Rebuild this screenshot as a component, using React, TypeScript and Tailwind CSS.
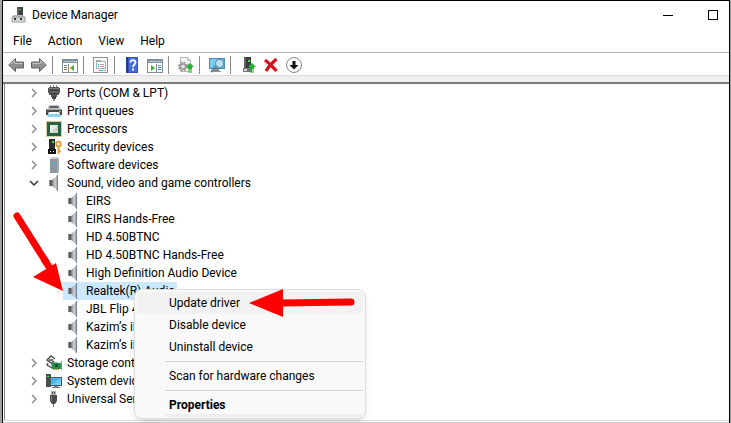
import { useState, type ReactNode } from "react";

type IconProps = { children: ReactNode };

function Icon({ children }: IconProps) {
  return (
    <svg viewBox="0 0 16 16" className="h-4 w-4 shrink-0" aria-hidden="true">
      {children}
    </svg>
  );
}

/* Tree icons */

function PortIcon() {
  return (
    <Icon>
      <path d="M4.500 0v3M7.500 0v3M10.500 0v3" stroke="#8a8a8a" />
      <path d="M3 2h10v1h1v5h-1v2h-2v2H5v-2H3V8H2V3h1z" fill="#555" />
      <path d="M3 3h10v1H3z" fill="#7c7c7c" />
      <path d="M4 5.500h8M5 8.500h6" stroke="#383838" />
      <path d="M4 7h8" stroke="#747474" />
      <path d="M6 11h4v3H6z" fill="#444" />
      <path d="M7 14h2v2H7z" fill="#8a8a8a" />
    </Icon>
  );
}

function PrinterIcon() {
  return (
    <Icon>
      <path d="M3 2h10l2 4H1z" fill="#c3c6c8" />
      <path d="M4 3h8l1 2H3z" fill="#5a6063" />
      <path d="M1 6h14l1 1v5H0V7z" fill="#4a4a4a" />
      <path d="M1 6h14v1H1z" fill="#a8a8a8" />
      <path d="M3 9h10l2 5H1z" fill="#8ad4ef" />
      <path d="M3 9h10l1 2H2z" fill="#f7f7f7" />
      <path d="M13 8h2v1h-2z" fill="#52d34f" />
    </Icon>
  );
}

function ProcessorIcon() {
  return (
    <Icon>
      <rect x="0.500" y="0.500" width="15" height="15" fill="none" stroke="#b79a4a" strokeDasharray="1 1" />
      <rect x="1" y="1" width="14" height="14" fill="#25623f" />
      <rect x="4" y="4" width="8" height="8" fill="#e9ebea" />
      <path d="M4 12l8-8v8z" fill="#cfd3d1" />
    </Icon>
  );
}

function SecurityIcon() {
  return (
    <Icon>
      <path d="M3 0h6v11H3z" fill="#2b2b2b" />
      <path d="M6 2h2v2H6z" fill="#35e83b" />
      <path d="M2 10h8v5H2z" fill="#161616" />
      <path d="M4 12h1v1H4zM7 12h1v1H7z" fill="#fff" />
      <circle cx="12.500" cy="5" r="2.300" fill="none" stroke="#dc9a2e" strokeWidth="1.800" />
      <path d="M12.500 7v8M12.500 12.500H15M12.500 10H14" stroke="#dc9a2e" strokeWidth="1.600" fill="none" />
    </Icon>
  );
}

function SoftwareIcon() {
  return (
    <Icon>
      <path d="M5 1l2-1h4l2 1v14l-1 1H4V2z" fill="#a3abb0" />
      <path d="M4 2h7v14H4z" fill="#8b979f" />
      <path d="M5 1l2-1h4l2 1-2 1H4z" fill="#c9ced1" />
      <path d="M7 5h2v2H7z" fill="#35c9f5" />
    </Icon>
  );
}

function SpeakerIcon() {
  return (
    <Icon>
      <defs>
        <linearGradient id="cone" x1="0" x2="1">
          <stop offset="0" stopColor="#777b7e" />
          <stop offset="0.500" stopColor="#d0d2d4" />
          <stop offset="1" stopColor="#888d91" />
        </linearGradient>
      </defs>
      <path d="M3 5h3v6H3z" fill="#8d9092" />
      <path d="M4 5h2v6H4z" fill="#5b5f62" />
      <path d="M6 5l5-4h1v14h-1l-5-4z" fill="url(#cone)" />
      <path d="M11 0h1v16h-1z" fill="#708496" />
    </Icon>
  );
}

function StorageIcon() {
  return (
    <Icon>
      <path d="M9 4L5 1 1 5l4 3 3-2M3 5h4M2 8l-1 2 5 3" fill="none" stroke="#4a4a4a" strokeWidth="1.400" />
      <path d="M5 7l10 1v6H6z" fill="#2f8a4b" />
      <path d="M9 9h3v3H9z" fill="#1b4f35" />
      <path d="M7 14h6v1H7z" fill="#cda94a" />
      <path d="M15.500 6v9" stroke="#8f8f8f" />
    </Icon>
  );
}

function SystemIcon() {
  return (
    <Icon>
      <path d="M0 1h5v13H0z" fill="#484c4e" />
      <path d="M1 3h2v1H1z" fill="#43e04a" />
      <path d="M4 4h12v9H4z" fill="#4b5b66" />
      <path d="M5 5h10v7H5z" fill="#3fb4ee" />
      <path d="M5 12l10-7v7z" fill="#72cbf6" />
      <path d="M8 13h4v1H8zM6 14h8v1H6z" fill="#777" />
    </Icon>
  );
}

function UsbIcon() {
  return (
    <Icon>
      <path d="M5 0h5v4H5z" fill="#b5b5b5" />
      <path d="M6 1h1v2H6zM8 1h1v2H8z" fill="#4b4b4b" />
      <path d="M4 4h7v6l-2 3H6l-2-3z" fill="#4a4a4a" />
      <path d="M5 5h1v5H5z" fill="#858585" />
      <path d="M7 13h1v3H7z" fill="#777" />
    </Icon>
  );
}

/* Toolbar icons */

const arrowPath = "M0.700 8L7.500 1.500v3.500H15.500v6H7.500v3.500z";

function BackIcon() {
  return (
    <Icon>
      <path d={arrowPath} fill="#8e8e8e" stroke="#636363" />
      <path d="M2.500 7.500l4-4V6.500h8" fill="none" stroke="#c0c0c0" />
    </Icon>
  );
}

function ForwardIcon() {
  return (
    <Icon>
      <path d={arrowPath} transform="matrix(-1 0 0 1 16 0)" fill="#8e8e8e" stroke="#636363" />
      <path d="M13.500 7.500l-4-4V6.500h-8" fill="none" stroke="#c0c0c0" />
    </Icon>
  );
}

function PaneFrame({ children }: IconProps) {
  return (
    <Icon>
      <rect x="0.500" y="2.500" width="15" height="13" fill="#fff" stroke="#7d8d9b" />
      <path d="M1 3h14v3H1z" fill="#8595a3" />
      <path d="M2 4h9v1H2z" fill="#b9c4cc" />
      <path d="M12 4h1v1h-1zM14 4h1v1h-1z" fill="#fff" />
      {children}
    </Icon>
  );
}

function ConsoleTreeIcon() {
  return (
    <PaneFrame>
      <path d="M6.500 7v8" stroke="#7d8d9b" />
      <path d="M2 8.500h3M2 10.500h3M2 12.500h3" stroke="#4f87bd" />
      <path d="M12 8v6l-4-3z" fill="#3fae35" />
    </PaneFrame>
  );
}

function ActionPaneIcon() {
  return (
    <PaneFrame>
      <path d="M9.500 7v8" stroke="#7d8d9b" />
      <path d="M11 8.500h3M11 10.500h3M11 12.500h3" stroke="#4f87bd" />
      <path d="M4 8v6l4-3z" fill="#3fae35" />
    </PaneFrame>
  );
}

function PropertiesIcon() {
  return (
    <Icon>
      <rect x="0.500" y="0.500" width="14" height="15" fill="#f7f7f7" stroke="#929292" />
      <path d="M3.500 4.500h9v7h-9z" fill="#fff" stroke="#a7b0b7" />
      <path d="M3 3h5v2H3z" fill="#9aa7b1" />
      <path d="M5 7.500h1M5 9.500h1" stroke="#3d8dcb" />
      <path d="M7 7.500h4M7 9.500h4" stroke="#a8a8a8" />
      <path d="M6 13h4v1H6z" fill="#38b9e8" />
      <path d="M11 13h2v1h-2z" fill="#aaa" />
    </Icon>
  );
}

function HelpIcon() {
  return (
    <Icon>
      <path d="M2 0h12v16H2z" fill="#3156b8" />
      <path d="M2 0h2v16H2z" fill="#1f3c91" />
      <path d="M5 1h8v14H5z" fill="#4370d2" />
      <path d="M6.500 5.500c0-3.500 5-3 5 0C11.500 7.500 9 7.500 9 10" fill="none" stroke="#fff" strokeWidth="1.800" />
      <path d="M8 11.500h2v2H8z" fill="#fff" />
    </Icon>
  );
}

function UpdateIcon() {
  return (
    <Icon>
      <path d="M2.500 0.500h7l3 3v11h-10z" fill="#f5f5f5" stroke="#b9b9b9" />
      <path d="M9.500 0.500v3h3" fill="none" stroke="#b9b9b9" />
      <circle cx="5" cy="9.500" r="4" fill="none" stroke="#9a9a9a" strokeWidth="2" strokeDasharray="2 1.140" />
      <circle cx="5" cy="9.500" r="2.500" fill="#eee" stroke="#9a9a9a" strokeWidth="1.500" />
      <path d="M12 6l4 4h-2v2h-4v-2H8z" fill="#23b32c" />
      <path d="M10 12.500h4v1h-4zM10 14.500h4v1h-4z" fill="#23b32c" />
    </Icon>
  );
}

function ScanIcon() {
  return (
    <Icon>
      <path d="M0 1h16v11H0z" fill="#4a8dba" />
      <path d="M1 2h14v9H1z" fill="#54b7e8" />
      <path d="M1 11L13 2H1z" fill="#7fcbf0" />
      <path d="M5 12h5v2H5zM3 14h9v1H3z" fill="#8a8a8a" />
      <path d="M7.500 9.500L2 15" stroke="#6e7d87" strokeWidth="2" />
      <circle cx="10.500" cy="6.500" r="4" fill="#b9e3f7" stroke="#6f8fa3" strokeWidth="1.200" />
    </Icon>
  );
}

function EnableIcon() {
  return (
    <Icon>
      <path d="M4 0h7v12H4z" fill="#3b3b3b" />
      <path d="M4 0h2v12H4z" fill="#626262" />
      <path d="M8 3h2v2H8z" fill="#38e33f" />
      <path d="M3 11h9v4H3z" fill="#757575" />
      <path d="M4 12h3v2H4z" fill="#d4d4d4" />
      <path d="M12 6l4 4h-2v2h-4v-2H8z" fill="#23b32c" />
      <path d="M10 12.500h4v1h-4zM10 14.500h4v1h-4z" fill="#23b32c" />
    </Icon>
  );
}

function UninstallIcon() {
  return (
    <Icon>
      <path d="M2 3C6 6 10 10 13.500 14M13.500 2C9 6 6 9 3 14" fill="none" stroke="#d8101c" strokeWidth="3.200" />
    </Icon>
  );
}

function DisableIcon() {
  return (
    <Icon>
      <circle cx="8" cy="8" r="7.500" fill="#fafafa" stroke="#888" />
      <path d="M6.500 4h3v4h3L8 12.500 3.500 8h3z" fill="#111" />
    </Icon>
  );
}

function DeviceManagerIcon() {
  return (
    <Icon>
      <path d="M6 0h6v9H6z" fill="#3d4042" />
      <path d="M6 0h2v9H6z" fill="#5c6062" />
      <path d="M8 2h2v1H8z" fill="#39d84a" />
      <path d="M2 8h9l3 2v5H1v-5z" fill="#b8bcbf" />
      <path d="M1 10h13v5H1z" fill="#d3d5d6" stroke="#8e9193" strokeWidth="0.800" />
      <path d="M3 11h2v2H3zM9 11h2v2H9z" fill="#333" />
    </Icon>
  );
}

type Tool = { label: string; icon: ReactNode };

const toolGroups: Tool[][] = [
  [
    { label: "Back", icon: <BackIcon /> },
    { label: "Forward", icon: <ForwardIcon /> },
  ],
  [{ label: "Show/Hide console tree", icon: <ConsoleTreeIcon /> }],
  [{ label: "Properties", icon: <PropertiesIcon /> }],
  [
    { label: "Help", icon: <HelpIcon /> },
    { label: "Show/Hide action pane", icon: <ActionPaneIcon /> },
  ],
  [{ label: "Update device driver", icon: <UpdateIcon /> }],
  [{ label: "Scan for hardware changes", icon: <ScanIcon /> }],
  [
    { label: "Enable device", icon: <EnableIcon /> },
    { label: "Uninstall device", icon: <UninstallIcon /> },
    { label: "Disable device", icon: <DisableIcon /> },
  ],
];

type Category = { name: string; icon: ReactNode; devices?: string[] };

const categories: Category[] = [
  { name: "Ports (COM & LPT)", icon: <PortIcon /> },
  { name: "Print queues", icon: <PrinterIcon /> },
  { name: "Processors", icon: <ProcessorIcon /> },
  { name: "Security devices", icon: <SecurityIcon /> },
  { name: "Software devices", icon: <SoftwareIcon /> },
  {
    name: "Sound, video and game controllers",
    icon: <SpeakerIcon />,
    devices: [
      "EIRS",
      "EIRS Hands-Free",
      "HD 4.50BTNC",
      "HD 4.50BTNC Hands-Free",
      "High Definition Audio Device",
      "Realtek(R) Audio",
      "JBL Flip 4",
      "Kazim’s iPhone",
      "Kazim’s iPhone",
    ],
  },
  { name: "Storage controllers", icon: <StorageIcon /> },
  { name: "System devices", icon: <SystemIcon /> },
  { name: "Universal Serial Bus", icon: <UsbIcon /> },
];

function Chevron({ open }: { open: boolean }) {
  return (
    <svg viewBox="0 0 12 12" className="h-3 w-3 shrink-0" fill="none" strokeWidth="1.500" aria-hidden="true">
      {open ? <path d="M2 4l4 4 4-4" stroke="#333" /> : <path d="M4 2l4 4-4 4" stroke="#8c8c8c" />}
    </svg>
  );
}

function DeviceTree() {
  const [selected, setSelected] = useState(5);

  return (
    <ul className="ml-px flex-1 overflow-hidden border-l border-[#8a8a8a] pl-[23px]">
      {categories.map((cat) => (
        <li key={cat.name}>
          <button className="flex h-[18px] items-center whitespace-nowrap" aria-expanded={!!cat.devices}>
            <Chevron open={!!cat.devices} />
            <span className="ml-1.5 mr-[5px]">{cat.icon}</span>
            {cat.name}
          </button>
          {cat.devices && (
            <ul className="pl-[35px]">
              {cat.devices.map((device, i) => (
                <li key={i}>
                  <button
                    onClick={() => setSelected(i)}
                    className={`flex h-[18px] items-center gap-[5px] whitespace-nowrap px-0.5 ${
                      selected === i ? "bg-[#cce8ff]" : ""
                    }`}
                  >
                    <SpeakerIcon />
                    {device}
                  </button>
                </li>
              ))}
            </ul>
          )}
        </li>
      ))}
    </ul>
  );
}

function MenuItem({ label, className = "" }: { label: string; className?: string }) {
  return (
    <button role="menuitem" className={`block h-[22px] w-full rounded-sm pl-8 text-left hover:bg-[#f2f2f2] ${className}`}>
      {label}
    </button>
  );
}

function MenuSeparator() {
  return <div role="separator" className="my-[3px] ml-7 h-px bg-[#d4d4d4]" />;
}

function ContextMenu() {
  return (
    <div
      role="menu"
      className="absolute left-[134px] top-[289px] w-[232px] rounded-lg border border-[#dedede] bg-[#f9f9f9] px-0.5 pb-px pt-0.5 shadow-md"
    >
      <MenuItem label="Update driver" className="bg-[#f2f2f2]" />
      <MenuItem label="Disable device" />
      <MenuItem label="Uninstall device" />
      <MenuSeparator />
      <MenuItem label="Scan for hardware changes" />
      <MenuSeparator />
      <MenuItem label="Properties" className="font-bold" />
      <div className="-mt-0.5 ml-7 h-[3px] bg-[#efefef]" />
    </div>
  );
}

function Pointers() {
  return (
    <>
      <svg viewBox="0 0 56 92" className="absolute left-2 top-[208px] h-[92px] w-14" aria-hidden="true">
        <path d="M9 8L38 54" stroke="#fe0000" strokeWidth="7" strokeLinecap="round" />
        <path d="M25 69L48 55L55 83z" fill="#fe0000" />
        <path d="M36 51L43 62" stroke="#fe0000" strokeWidth="7" />
      </svg>
      <svg viewBox="0 0 108 30" className="absolute left-[248px] top-[288px] h-[30px] w-[108px]" aria-hidden="true">
        <path d="M32 15L103 14" stroke="#fe0000" strokeWidth="7" strokeLinecap="round" />
        <path d="M1 15L35 1V29z" fill="#fe0000" />
      </svg>
    </>
  );
}

export default function App() {
  return (
    <div className="relative flex min-h-screen bg-[#a3a3a5] pl-0.5 pr-px font-[Roboto,'Open_Sans',sans-serif] text-[12px] leading-[18px] text-black">
      <div className="flex flex-1 flex-col border-x border-t border-black bg-white">
        <header className="flex h-7 items-center pl-2 pr-[11px]">
          <DeviceManagerIcon />
          <h1 className="ml-[5px] flex-1">Device Manager</h1>
          <div className="flex gap-[35px]">
            <button aria-label="Minimize">
              <svg viewBox="0 0 10 10" className="h-2.5 w-2.5">
                <path d="M0 5.500h10" stroke="#000" />
              </svg>
            </button>
            <button aria-label="Maximize">
              <svg viewBox="0 0 10 10" className="h-2.5 w-2.5">
                <rect x="0.500" y="0.500" width="9" height="9" fill="none" stroke="#000" />
              </svg>
            </button>
          </div>
        </header>

        <nav className="flex h-6 items-center gap-4 border-b border-[#b0b0b0] pl-2.5">
          <button>File</button>
          <button>Action</button>
          <button>View</button>
          <button>Help</button>
        </nav>

        <div className="flex h-[22px] items-center pl-px pt-px">
          {toolGroups.map((group, i) => (
            <div key={i} className="flex items-center">
              {i > 0 && <div className="ml-0.5 mr-[5px] h-[18px] w-px bg-[#8c8c8c]" />}
              {group.map((tool) => (
                <button key={tool.label} aria-label={tool.label} className="flex w-[23px] justify-center">
                  {tool.icon}
                </button>
              ))}
            </div>
          ))}
        </div>

        <div className="h-[9px] border-b-2 border-t border-b-[#7a7a7a] border-t-[#dadada] bg-[#efefef]" />

        <DeviceTree />

        <footer className="h-[3px] border-b border-t border-b-[#cfcfcf] border-t-[#dcdcdc]" />
      </div>

      <ContextMenu />
      <Pointers />
    </div>
  );
}
